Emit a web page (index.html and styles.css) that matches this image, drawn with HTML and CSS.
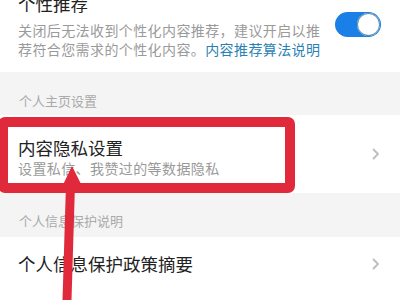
FILE: index.html
```html
<!DOCTYPE html>
<html lang="zh-CN">
<head>
<meta charset="utf-8">
<link rel="stylesheet" href="styles.css">
</head>
<body>
<div class="page">
  <section class="rec">
    <div class="rec-text">
      <div class="rec-title">个性推荐</div>
      <p class="rec-desc">关闭后无法收到个性化内容推荐，建议开启以推荐符合您需求的个性化内容。<span class="link">内容推荐算法说明</span></p>
    </div>
    <div class="toggle"><span class="knob"></span></div>
  </section>
  <div class="group-head first">个人主页设置</div>
  <div class="row row-privacy">
    <div class="row-text">
      <div class="row-title">内容隐私设置</div>
      <div class="row-sub">设置私信、我赞过的等数据隐私</div>
    </div>
    <svg class="chev" width="8" height="12" viewBox="0 0 8 12"><path d="M1.5 1.5 L6 6 L1.5 10.5" fill="none" stroke="#bdbdbd" stroke-width="1.8" stroke-linecap="round" stroke-linejoin="round"/></svg>
  </div>
  <div class="group-head second">个人信息保护说明</div>
  <div class="row row-policy">
    <div class="row-title">个人信息保护政策摘要</div>
    <svg class="chev" width="8" height="12" viewBox="0 0 8 12"><path d="M1.5 1.5 L6 6 L1.5 10.5" fill="none" stroke="#bdbdbd" stroke-width="1.8" stroke-linecap="round" stroke-linejoin="round"/></svg>
  </div>

  <div class="frame"></div>
  <svg class="arrow" width="400" height="300" viewBox="0 0 400 300">
    <polygon points="66,184 75,184 71.5,300 62.5,300" fill="#e02a3b"/>
    <polygon points="72,166 60.5,190 84,190" fill="#e02a3b"/>
  </svg>
</div>
</body>
</html>
```
FILE: styles.css
```css
* { box-sizing: border-box; }
html, body { margin: 0; padding: 0; }
body {
  background: #fff;
  font-family: "Noto Sans CJK SC", "Noto Sans", sans-serif;
  width: 400px;
  height: 300px;
  overflow: hidden;
}
.page {
  position: relative;
  width: 400px;
}
.rec {
  display: flex;
  justify-content: space-between;
  align-items: flex-start;
  height: 72px;
  padding: 0 19px 0 18px;
  background: #fff;
}
.rec-text { margin-top: -8px; }
.rec-title {
  font-size: 17.5px;
  line-height: 24px;
  color: #222;
}
.rec-desc {
  margin: 5px 0 0;
  width: 308px;
  font-size: 14px;
  letter-spacing: 0.4px;
  line-height: 19px;
  color: #9a9a9a;
}
.link { color: #2a82b4; }
.toggle {
  margin-top: 12px;
  width: 46px;
  height: 25px;
  border-radius: 13px;
  background: #1a7fe6;
  position: relative;
  flex: none;
}
.knob {
  position: absolute;
  right: 1px;
  top: 1px;
  width: 23px;
  height: 23px;
  border-radius: 50%;
  background: #fff;
  box-shadow: 0 0 0 1px #5d8fb0 inset;
}
.group-head {
  background: #f4f4f4;
  padding-left: 19px;
  font-size: 13px;
  line-height: 18px;
  color: #aaa;
}
.group-head.first { height: 43px; padding-top: 20px; }
.group-head.second { height: 44px; padding-top: 19px; }
.row {
  display: flex;
  justify-content: space-between;
  align-items: center;
  padding: 0 20px 0 18px;
  background: #fff;
}
.row-privacy { height: 78px; }
.row-policy { height: 54px; }
.row-title {
  font-size: 17.5px;
  line-height: 22px;
  color: #222;
}
.row-sub {
  font-size: 14px;
  letter-spacing: 0.4px;
  line-height: 18px;
  color: #9a9a9a;
}
.row-privacy .row-text { margin-top: 6px; }
.chev { flex: none; }
.frame {
  position: absolute;
  left: -2px;
  top: 117px;
  width: 297px;
  height: 76px;
  border: 10px solid #e02a3b;
  border-radius: 7px;
}
.arrow {
  position: absolute;
  left: 0;
  top: 0;
  pointer-events: none;
}
```
